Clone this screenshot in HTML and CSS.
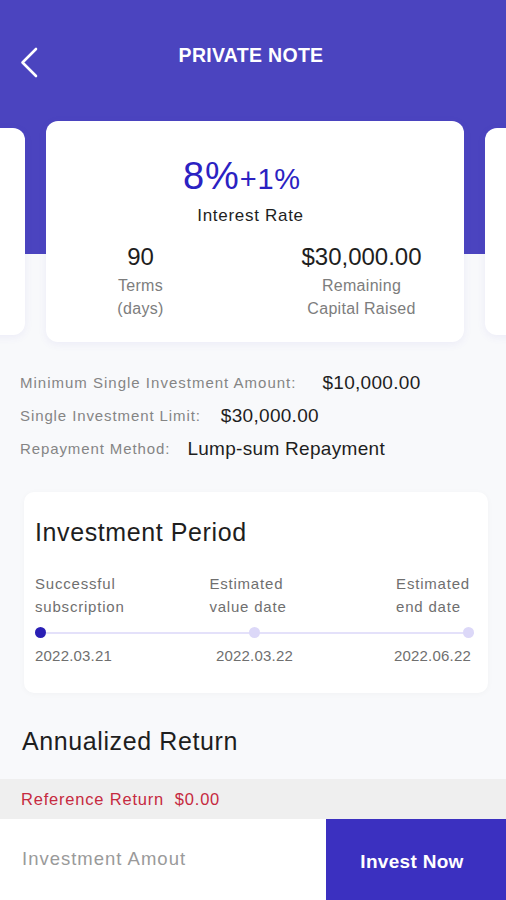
FILE: index.html
```html
<!DOCTYPE html>
<html lang="en">
<head>
    <meta charset="UTF-8">
    <meta name="viewport" content="width=device-width, initial-scale=1.0">
    <title>Private Note</title>
    <link rel="stylesheet" href="styles.css">
</head>
<body>
    <div class="top">
        <div class="nav">
            <svg class="back" width="20" height="32" viewBox="0 0 20 32">
                <polyline points="16,3 2.5,16.5 16,30" fill="none" stroke="#fff" stroke-width="2.6" stroke-linecap="round" stroke-linejoin="round"/>
            </svg>
            <h1>PRIVATE NOTE</h1>
        </div>

        <div class="carousel">
            <div class="card side"></div>
            <div class="card main">
                <div class="rate"><span class="big">8%</span><span class="plus">+1%</span></div>
                <div class="rate-label">Interest Rate</div>
                <div class="stats">
                    <div class="stat days">
                        <div class="num">90</div>
                        <div class="cap">Terms<br>(days)</div>
                    </div>
                    <div class="stat capital">
                        <div class="num">$30,000.00</div>
                        <div class="cap">Remaining<br>Capital Raised</div>
                    </div>
                </div>
            </div>
            <div class="card side"></div>
        </div>
    </div>

    <div class="info">
        <div class="row"><span class="label wide">Minimum Single Investment Amount:</span><span class="value">$10,000.00</span></div>
        <div class="row"><span class="label">Single Investment Limit:</span><span class="value">$30,000.00</span></div>
        <div class="row"><span class="label narrow">Repayment Method:</span><span class="value">Lump-sum Repayment</span></div>
    </div>

    <div class="period">
        <h2>Investment Period</h2>
        <div class="steps">
            <div class="step first">Successful<br>subscription</div>
            <div class="step mid">Estimated<br>value date</div>
            <div class="step last">Estimated<br>end date</div>
        </div>
        <div class="track">
            <span class="dot on"></span>
            <span class="dot"></span>
            <span class="dot"></span>
        </div>
        <div class="dates">
            <div class="step first">2022.03.21</div>
            <div class="step mid">2022.03.22</div>
            <div class="step last">2022.06.22</div>
        </div>
    </div>

    <h2 class="annual">Annualized Return</h2>

    <div class="ref">Reference Return&nbsp;&nbsp;$0.00</div>

    <div class="bottom">
        <div class="amount">Investment Amout</div>
        <button class="invest">Invest Now</button>
    </div>
</body>
</html>
```

FILE: styles.css
```css
body {
    margin: 0;
    width: 506px;
    font-family: "Liberation Sans", Arial, sans-serif;
    background: #f8f9fb;
    color: #1e1e1e;
}
.top {
    background: linear-gradient(#4b44bf 0, #4b44bf 254px, transparent 254px);
    overflow: hidden;
}
.nav {
    position: relative;
    height: 30px;
    padding-top: 40px;
}
.back {
    position: absolute;
    left: 20px;
    top: 46px;
}
.nav h1 {
    margin: 0;
    text-align: center;
    line-height: 30px;
    font-size: 19.5px;
    font-weight: 700;
    letter-spacing: 0.3px;
    color: #fff;
    padding-right: 4px;
}
.carousel {
    display: flex;
    justify-content: center;
    align-items: center;
    gap: 21px;
    margin-top: 51px;
    padding-bottom: 10px;
    padding-left: 3px;
}
.card {
    flex-shrink: 0;
    width: 418px;
    background: #fff;
    border-radius: 12px;
    box-shadow: 0 2px 8px rgba(90, 80, 200, 0.08);
}
.card.side {
    height: 207px;
}
.card.main {
    height: 221px;
    text-align: center;
    box-sizing: border-box;
    padding-top: 33px;
}
.rate {
    color: #2b22c2;
    line-height: 44px;
    padding-right: 25px;
    letter-spacing: 0.8px;
}
.rate .big {
    font-size: 38px;
}
.rate .plus {
    font-size: 29px;
}
.rate-label {
    font-size: 17px;
    letter-spacing: 0.7px;
    line-height: 24px;
    margin-top: -2px;
    padding-right: 8px;
}
.stats {
    display: flex;
    margin-top: 14px;
}
.stat {
    text-align: center;
}
.stat.days {
    width: 120px;
    margin-left: 35px;
}
.stat.capital {
    width: 160px;
    margin-left: auto;
    margin-right: 22px;
}
.num {
    font-size: 24px;
    line-height: 30px;
}
.cap {
    font-size: 16px;
    letter-spacing: 0.3px;
    line-height: 23px;
    color: #7d7d7d;
    margin-top: 2px;
}
.info {
    padding: 14px 0 0 20px;
}
.row {
    display: flex;
    align-items: center;
    height: 33px;
}
.label {
    font-size: 15px;
    letter-spacing: 0.9px;
    color: #858585;
    margin-right: 20px;
}
.label.wide {
    letter-spacing: 1px;
    margin-right: 26px;
}
.label.narrow {
    margin-right: 17px;
}
.value {
    font-size: 19px;
    letter-spacing: 0.3px;
    color: #1e1e1e;
}
.period {
    margin: 27px 18px 0 24px;
    background: #fff;
    border-radius: 10px;
    padding: 25px 14px 27px 11px;
    box-shadow: 0 1px 6px rgba(0, 0, 0, 0.03);
}
.period h2 {
    margin: 0 0 25px;
    font-size: 25px;
    letter-spacing: 0.6px;
    font-weight: 400;
    line-height: 30px;
}
.steps, .dates {
    display: grid;
    grid-template-columns: 1fr 1fr 1fr;
    font-size: 15px;
    color: #6f6f6f;
}
.steps {
    line-height: 23px;
    letter-spacing: 0.8px;
}
.dates {
    line-height: 20px;
    letter-spacing: 0.2px;
}
.step.mid {
    justify-self: center;
}
.step.last {
    justify-self: end;
}
.steps .step.mid {
    margin-right: 13px;
}
.steps .step.last {
    margin-right: 4px;
}
.dates .step.last {
    margin-right: 3px;
}
.track {
    display: flex;
    justify-content: space-between;
    align-items: center;
    margin: 9px 0 8px;
    background: linear-gradient(#e4e1fa, #e4e1fa) center / 100% 2px no-repeat;
}
.dot {
    width: 11px;
    height: 11px;
    border-radius: 50%;
    background: #dcd8f8;
}
.dot.on {
    background: #2a1fb5;
}
.annual {
    margin: 33px 0 23px 22px;
    font-size: 25px;
    letter-spacing: 0.6px;
    font-weight: 400;
    line-height: 30px;
}
.ref {
    background: #efefef;
    height: 40px;
    line-height: 40px;
    padding-left: 21px;
    font-size: 16.5px;
    letter-spacing: 0.8px;
    color: #c62a40;
}
.bottom {
    display: flex;
    height: 81px;
    background: #fff;
}
.amount {
    flex: 1;
    padding-left: 22px;
    line-height: 80px;
    font-size: 18.5px;
    letter-spacing: 1px;
    color: #9a9a9a;
}
.invest {
    width: 180px;
    border: none;
    background: #3b30c0;
    color: #fff;
    font-family: inherit;
    font-size: 19px;
    font-weight: 700;
    letter-spacing: 0.3px;
    padding: 4px 8px 0 0;
}
```
